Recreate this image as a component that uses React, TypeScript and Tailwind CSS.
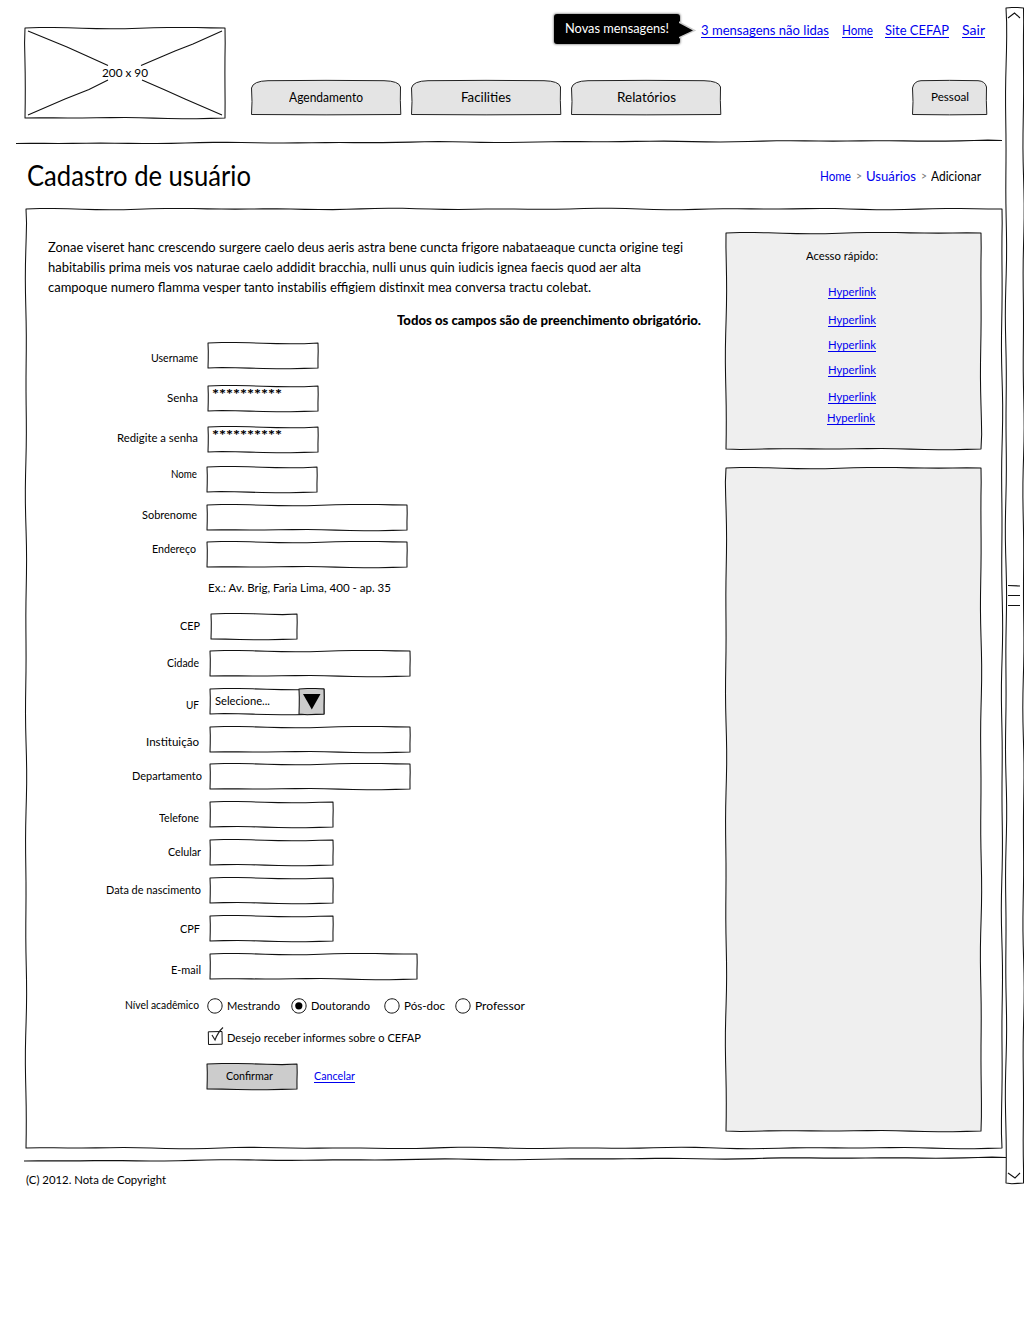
import { useLayoutEffect, useRef, useState, type ReactNode } from "react";

/* One line of text, condensed or stretched to an exact width. */
function Ink({ children, w, className = "" }: { children: ReactNode; w: number; className?: string }) {
  const ref = useRef<HTMLSpanElement>(null);
  const [scale, setScale] = useState(1);
  useLayoutEffect(() => {
    if (ref.current) setScale(w / ref.current.getBoundingClientRect().width);
    // measured once, before the scale is applied
  }, []);
  return (
    <span className={`block shrink-0 whitespace-nowrap text-left ${className}`} style={{ width: w }}>
      <span ref={ref} className="inline-block origin-left" style={{ transform: `scaleX(${scale})` }}>
        {children}
      </span>
    </span>
  );
}

function wobble(x1: number, y1: number, x2: number, y2: number, amp: number, seed: number) {
  const len = Math.hypot(x2 - x1, y2 - y1);
  const n = Math.max(3, Math.round(len / 14));
  const nx = -(y2 - y1) / len;
  const ny = (x2 - x1) / len;
  let d = "";
  for (let i = 1; i <= n; i++) {
    const t = i / n;
    const o = i === n ? 0 : amp * Math.sin(i * 0.62 + seed) * Math.cos(i * 0.17 + seed * 2);
    d += `L${(x1 + (x2 - x1) * t + nx * o).toFixed(2)} ${(y1 + (y2 - y1) * t + ny * o).toFixed(2)}`;
  }
  return d;
}

/* Hand-drawn rectangle behind the content of a box. */
function Frame({ w, h, fill = "none" }: { w: number; h: number; fill?: string }) {
  const d = `M0 0${wobble(0, 0, w, 0, 0.8, 1)}${wobble(w, 0, w, h, 0.7, 2)}${wobble(w, h, 0, h, 0.8, 3)}${wobble(0, h, 0, 0, 0.7, 4)}Z`;
  return (
    <svg className="pointer-events-none absolute left-0 top-0 overflow-visible" width={w} height={h} aria-hidden="true">
      <path d={d} fill={fill} stroke="#111" strokeWidth="1.05" strokeLinejoin="round" />
    </svg>
  );
}

function Rule({ w, y1, y2, className }: { w: number; y1: number; y2: number; className: string }) {
  return (
    <svg className={`block shrink-0 overflow-visible ${className}`} width={w} height="4" aria-hidden="true">
      <path d={`M0 ${y1}${wobble(0, y1, w, y2, 0.6, 2)}`} fill="none" stroke="#111" strokeWidth="1.15" />
    </svg>
  );
}

function Tab({ label, w, tw, small = false }: { label: string; w: number; tw: number; small?: boolean }) {
  const r = small ? 9 : 17;
  const d = `M0.5 34.5Q1.5 22 0.5 8Q2 1 ${r} 0.7Q${w / 2} 0 ${w - r} 0.7Q${w - 2} 1 ${w - 0.5} 7Q${w - 1} 20 ${w - 0.2} 34.5Q${w / 2} 35.2 0.5 34.5Z`;
  return (
    <button type="button" className="relative flex h-[35px] justify-center" style={{ width: w }}>
      <svg className="absolute left-0 top-0 overflow-visible" width={w} height="35" aria-hidden="true">
        <path d={d} fill="#e4e4e4" stroke="#222" strokeWidth="1" />
      </svg>
      <Ink w={tw} className={small ? "relative pt-[8px] text-[12px] leading-[18px]" : "relative pt-[7px] text-[14px] leading-5"}>
        {label}
      </Ink>
    </button>
  );
}

type Row = { label: string; tw: number; row: string; lab: string; gap: string; fw: number; kind?: "pass" | "select" };

const rowsA: Row[] = [
  { label: "Username", tw: 47, row: "h-[43px]", lab: "w-[150px] pt-[11px]", gap: "ml-[10px]", fw: 110 },
  { label: "Senha", tw: 31, row: "h-[41px]", lab: "w-[150px] pt-[8px]", gap: "ml-[10px]", fw: 110, kind: "pass" },
  { label: "Redigite a senha", tw: 81, row: "h-[40px]", lab: "w-[150px] pt-[7px]", gap: "ml-[10px]", fw: 110, kind: "pass" },
  { label: "Nome", tw: 26, row: "h-[38px]", lab: "w-[149px] pt-[3px]", gap: "ml-[10px]", fw: 110 },
  { label: "Sobrenome", tw: 55, row: "h-[37px]", lab: "w-[149px] pt-[6px]", gap: "ml-[10px]", fw: 200 },
  { label: "Endereço", tw: 44, row: "h-[42px]", lab: "w-[148px] pt-[3px]", gap: "ml-[11px]", fw: 200 },
];

const rowsB: Row[] = [
  { label: "CEP", tw: 20, row: "h-[37px]", lab: "w-[152px] pt-[8px]", gap: "ml-[11px]", fw: 86 },
  { label: "Cidade", tw: 32, row: "h-[38px]", lab: "w-[151px] pt-[8px]", gap: "ml-[11px]", fw: 200 },
  { label: "UF", tw: 13, row: "h-[38px]", lab: "w-[151px] pt-[12px]", gap: "ml-[11px]", fw: 114, kind: "select" },
  { label: "Instituição", tw: 53, row: "h-[37px]", lab: "w-[151px] pt-[11px]", gap: "ml-[11px]", fw: 200 },
  { label: "Departamento", tw: 70, row: "h-[38px]", lab: "w-[154px] pt-[8px]", gap: "ml-[8px]", fw: 200 },
  { label: "Telefone", tw: 40, row: "h-[38px]", lab: "w-[151px] pt-[12px]", gap: "ml-[11px]", fw: 123 },
  { label: "Celular", tw: 33, row: "h-[38px]", lab: "w-[153px] pt-[8px]", gap: "ml-[9px]", fw: 123 },
  { label: "Data de nascimento", tw: 95, row: "h-[38px]", lab: "w-[153px] pt-[8px]", gap: "ml-[9px]", fw: 123 },
  { label: "CPF", tw: 20, row: "h-[38px]", lab: "w-[152px] pt-[9px]", gap: "ml-[10px]", fw: 123 },
  { label: "E-mail", tw: 30, row: "h-[47px]", lab: "w-[153px] pt-[12px]", gap: "ml-[9px]", fw: 207 },
];

function FormRow({ r }: { r: Row }) {
  return (
    <div className={`flex items-start ${r.row}`}>
      <div className={`flex shrink-0 justify-end ${r.lab}`}>
        <Ink w={r.tw}>{r.label}</Ink>
      </div>
      <div className={`relative mt-[5px] flex h-[25px] ${r.gap}`} style={{ width: r.fw }}>
        <Frame w={r.fw} h={25} />
        {r.kind === "pass" && (
          <Ink w={70} className="relative ml-1 text-[13px] font-black leading-4">
            **********
          </Ink>
        )}
        {r.kind === "select" && (
          <>
            <Ink w={55} className="relative ml-[5px] pt-[3px]">
              Selecione...
            </Ink>
            <div className="relative ml-auto h-[25px] w-[25px]">
              <Frame w={25} h={25} fill="#ccc" />
              <svg className="absolute left-[4px] top-[5px]" width="18" height="16" aria-hidden="true">
                <path d="M0 0H17.5L8.8 15.5Z" />
              </svg>
            </div>
          </>
        )}
      </div>
    </div>
  );
}

function Radio({ label, tw, on = false, gap }: { label: string; tw: number; on?: boolean; gap: string }) {
  return (
    <label className={`flex items-start ${gap}`}>
      <svg className="shrink-0" width="16" height="16" viewBox="0 0 16 16" aria-hidden="true">
        <path d="M8 .8C12.2.7 15.2 4 15.1 8S12 15 7.9 15.1.7 12 .8 7.9 3.8.9 8 .8Z" fill="none" stroke="#111" />
        {on && <circle cx="7.8" cy="7.8" r="3.6" />}
      </svg>
      <Ink w={tw} className="ml-1 -mt-px">
        {label}
      </Ink>
    </label>
  );
}

const quickLinks = ["mt-[18px] ml-[102px]", "mt-[10px] ml-[102px]", "mt-[7px] ml-[102px]", "mt-[7px] ml-[102px]", "mt-[9px] ml-[102px]", "mt-[3px] ml-[101px]"];

const linkStyle = "text-[#0000ee] [&_span_span]:underline [&_span_span]:decoration-1 [&_span_span]:underline-offset-2 [&_span_span]:[text-decoration-skip-ink:none]";

export default function App() {
  return (
    <div className="flex h-[1318px] w-[1024px] overflow-hidden bg-white font-['Lato',sans-serif] text-[12px] leading-[18px] text-black">
      <div className="flex w-[1006px] shrink-0 flex-col">
        <header className="flex h-[139px] shrink-0 pl-[25px]">
          <div className="relative mt-[28px] flex h-[90px] w-[200px] items-center justify-center">
            <Frame w={200} h={90} />
            <svg className="absolute left-0 top-0" width="200" height="90" aria-hidden="true">
              <path
                d="M3 3L42 19 62 28 83 37.5M197 3L168 16 150 23 116 37.5M3 87L40 71 64 61.5 83 52M117 52L140 62 160 71 197 87"
                fill="none"
                stroke="#111"
                strokeWidth="1.1"
              />
            </svg>
            <Ink w={46} className="relative">
              200 x 90
            </Ink>
          </div>
          <div className="ml-[26px] flex w-[736px] flex-col">
            <div className="flex h-[80px] justify-end pt-[14px]">
              <div className="relative flex h-[30px] w-[126px] rounded-[3px] bg-black shadow-[0_0_2px_1px_#aaa]">
                <svg className="absolute left-[125px] top-[9px] overflow-visible" width="15" height="15" aria-hidden="true">
                  <path d="M1 0L15 7.5 1 14Z" stroke="#ccc" strokeWidth="2" />
                  <path d="M0 0L14 7.5 0 14Z" />
                </svg>
                <Ink w={104} className="ml-[11px] pt-[4px] text-[14px] leading-5 text-white">
                  Novas mensagens!
                </Ink>
              </div>
              <nav className="ml-[21px] mr-[2px] flex pt-[6px] text-[14px] leading-5">
                <a className={linkStyle}><Ink w={128}>3 mensagens não lidas</Ink></a>
                <a className={`ml-[13px] ${linkStyle}`}><Ink w={31}>Home</Ink></a>
                <a className={`ml-[12px] ${linkStyle}`}><Ink w={64}>Site CEFAP</Ink></a>
                <a className={`ml-[13px] ${linkStyle}`}><Ink w={23}>Sair</Ink></a>
              </nav>
            </div>
            <nav className="flex gap-[10px]">
              <Tab label="Agendamento" w={150} tw={74} />
              <Tab label="Facilities" w={150} tw={50} />
              <Tab label="Relatórios" w={150} tw={59} />
              <div className="ml-auto">
                <Tab label="Pessoal" w={75} tw={38} small />
              </div>
            </nav>
          </div>
        </header>

        <Rule w={986} y1={4.5} y2={1.5} className="ml-[16px]" />

        <div className="flex h-[66px] shrink-0 items-start justify-between pl-[27px] pr-[25px]">
          <h1 className="pt-[11px] text-[29px] leading-[42px]">
            <Ink w={224}>Cadastro de usuário</Ink>
          </h1>
          <nav className="flex pt-[23px] text-[14px] leading-5 text-[#0000ee]">
            <a><Ink w={31}>Home</Ink></a>
            <Ink w={6} className="ml-[5px] text-[12px] text-[#777]">&gt;</Ink>
            <a className="ml-[4px]"><Ink w={50}>Usuários</Ink></a>
            <Ink w={6} className="ml-[5px] text-[12px] text-[#777]">&gt;</Ink>
            <Ink w={50} className="ml-[4px] text-black">Adicionar</Ink>
          </nav>
        </div>

        <main className="relative ml-[26px] flex h-[939px] w-[976px] shrink-0 items-start pl-[22px]">
          <Frame w={976} h={939} />
          <section className="relative flex w-[678px] flex-col pt-[28px]">
            <div className="text-[14px] leading-5">
              <Ink w={635}>
                Zonae viseret hanc crescendo surgere caelo deus aeris astra bene cuncta frigore nabataeaque cuncta origine tegi
              </Ink>
              <Ink w={593}>
                habitabilis prima meis vos naturae caelo addidit bracchia, nulli unus quin iudicis ignea faecis quod aer alta
              </Ink>
              <Ink w={543}>campoque numero flamma vesper tanto instabilis effigiem distinxit mea conversa tractu colebat.</Ink>
            </div>
            <Ink w={304} className="ml-[349px] mt-[13px] h-[28px] text-[13px] font-black leading-5">
              Todos os campos são de preenchimento obrigatório.
            </Ink>
            <form>
              {rowsA.map((r) => (
                <FormRow key={r.label} r={r} />
              ))}
              <Ink w={183} className="ml-[160px] h-[30px]">
                Ex.: Av. Brig, Faria Lima, 400 - ap. 35
              </Ink>
              {rowsB.map((r) => (
                <FormRow key={r.label} r={r} />
              ))}
              <div className="flex h-[34px] items-start pt-[2px]">
                <Ink w={74} className="ml-[77px] -mt-[2px]">
                  Nível acadêmico
                </Ink>
                <Radio label="Mestrando" tw={53} gap="ml-[8px]" />
                <Radio label="Doutorando" tw={59} gap="ml-[11px]" on />
                <Radio label="Pós-doc" tw={41} gap="ml-[14px]" />
                <Radio label="Professor" tw={50} gap="ml-[10px]" />
              </div>
              <label className="ml-[160px] flex h-[34px] items-start">
                <svg className="-mt-[4px] shrink-0 overflow-visible" width="15" height="19" aria-hidden="true">
                  <path d="M0.3 5.8L14 5.5 14.2 18.2 0.5 18.5Z" fill="none" stroke="#111" />
                  <path d="M4 9L7 14Q10 6 15 1.5" fill="none" stroke="#222" strokeWidth="1.2" />
                </svg>
                <Ink w={194} className="ml-[4px] -mt-px">
                  Desejo receber informes sobre o CEFAP
                </Ink>
              </label>
              <div className="ml-[159px] flex">
                <button type="button" className="relative flex h-[25px] w-[90px]">
                  <Frame w={90} h={25} fill="#ccc" />
                  <Ink w={47} className="relative ml-[19px] mt-[3px]">
                    Confirmar
                  </Ink>
                </button>
                <a className={`ml-[17px] mt-[3px] ${linkStyle}`}>
                  <Ink w={41}>Cancelar</Ink>
                </a>
              </div>
            </form>
          </section>
          <aside className="mt-[24px] flex flex-col gap-[19px]">
            <div className="relative h-[216px] w-[255px] pt-[14px]">
              <Frame w={255} h={216} fill="#efefef" />
              <Ink w={72} className="relative ml-[80px]">Acesso rápido:</Ink>
              {quickLinks.map((c, i) => (
                <a key={i} className={`relative block ${c} ${linkStyle}`}>
                  <Ink w={48}>Hyperlink</Ink>
                </a>
              ))}
            </div>
            <div className="relative h-[663px] w-[255px]">
              <Frame w={255} h={663} fill="#efefef" />
            </div>
          </aside>
        </main>

        <footer className="pt-[9px]">
          <Rule w={982} y1={4} y2={0.5} className="ml-[24px]" />
          <Ink w={140} className="ml-[26px] mt-[10px]">(C) 2012. Nota de Copyright</Ink>
        </footer>
      </div>

      <div className="relative mt-[8px] h-[1175px] w-[18px] shrink-0">
        <Frame w={17.5} h={1175} />
        <svg className="absolute left-0 top-0" width="18" height="1175" aria-hidden="true">
          <path
            d="M2 10L8.5 5 14 10M2 1165L9 1170 14 1165M2 577.5L14 578M2 587.5H14M2 597.5H14"
            fill="none"
            stroke="#111"
            strokeWidth="1.1"
          />
        </svg>
      </div>
    </div>
  );
}
